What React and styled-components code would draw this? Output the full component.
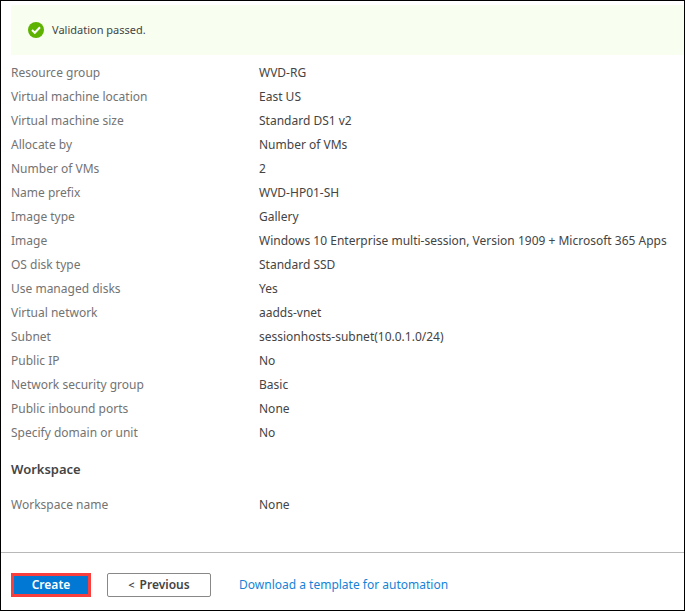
import React from "react";
import styled, { createGlobalStyle, css } from "styled-components";

const GlobalStyle = createGlobalStyle`
  *, *::before, *::after { box-sizing: border-box; }
  body {
    margin: 0;
    background: #fff;
    color: #444;
    font-family: "Noto Sans", "Open Sans", sans-serif;
    font-size: 12px;
    line-height: 24px;
  }
`;

const Page = styled.div`
  display: flex;
  flex-direction: column;
  min-height: 100vh;
  border: 1px solid #000;
`;

const Content = styled.main`
  flex: 1;
  padding: 4px 0 0 10px;
`;

const Banner = styled.div`
  display: flex;
  align-items: center;
  gap: 8px;
  height: 50px;
  margin-bottom: 6px;
  padding: 0 17px;
  background: #f8fff0;
  font-size: 11px;
`;

const StatusIcon = styled.svg`
  flex: none;
  width: 16px;
  height: 16px;
`;

const Details = styled.dl`
  display: grid;
  grid-template-columns: 248px 1fr;
  margin: 0;
`;

const Term = styled.dt`
  color: #737373;
`;

const Value = styled.dd`
  margin: 0;
  white-space: nowrap;
`;

const SectionTitle = styled.h2`
  margin: 12px 0;
  font-size: 13px;
  font-weight: 600;
`;

const Footer = styled.footer`
  display: flex;
  align-items: center;
  padding: 20px 10px 13px;
  border-top: 1px solid #b8b8b8;
`;

const Button = styled.button`
  display: flex;
  align-items: center;
  justify-content: center;
  height: 24px;
  margin-right: 16px;
  padding: 0;
  font: inherit;
  font-weight: 600;
  line-height: 16px;
  cursor: pointer;
  ${({ $primary }) =>
    $primary
      ? css`
          width: 80px;
          border: 3px solid #f93e3e;
          background: #0078d4;
          color: #fff;
        `
      : css`
          width: 104px;
          margin-right: 28px;
          border: 1px solid #8a8886;
          border-radius: 2px;
          background: #fff;
          color: #444;
        `}
`;

const Chevron = styled.span`
  margin-right: 5px;
  font-size: 11px;
`;

const TemplateLink = styled.a`
  color: #1583d8;
  text-decoration: none;
`;

const vmDetails = [
  ["Resource group", "WVD-RG"],
  ["Virtual machine location", "East US"],
  ["Virtual machine size", "Standard DS1 v2"],
  ["Allocate by", "Number of VMs"],
  ["Number of VMs", "2"],
  ["Name prefix", "WVD-HP01-SH"],
  ["Image type", "Gallery"],
  ["Image", "Windows 10 Enterprise multi-session, Version 1909 + Microsoft 365 Apps"],
  ["OS disk type", "Standard SSD"],
  ["Use managed disks", "Yes"],
  ["Virtual network", "aadds-vnet"],
  ["Subnet", "sessionhosts-subnet(10.0.1.0/24)"],
  ["Public IP", "No"],
  ["Network security group", "Basic"],
  ["Public inbound ports", "None"],
  ["Specify domain or unit", "No"],
];

const workspaceDetails = [["Workspace name", "None"]];

function DetailList({ items }) {
  return (
    <Details>
      {items.map(([label, value]) => (
        <React.Fragment key={label}>
          <Term>{label}</Term>
          <Value>{value}</Value>
        </React.Fragment>
      ))}
    </Details>
  );
}

export default function App() {
  return (
    <>
      <GlobalStyle />
      <Page>
        <Content>
          <Banner role="status">
            <StatusIcon viewBox="0 0 16 16" aria-hidden="true">
              <circle cx="8" cy="8" r="8" fill="#5db300" />
              <path d="M4 8 6.8 10.8 12 5.2" fill="none" stroke="#fff" strokeWidth="2" />
            </StatusIcon>
            Validation passed.
          </Banner>
          <DetailList items={vmDetails} />
          <SectionTitle>Workspace</SectionTitle>
          <DetailList items={workspaceDetails} />
        </Content>
        <Footer>
          <Button type="button" $primary>Create</Button>
          <Button type="button">
            <Chevron>&lt;</Chevron>
            Previous
          </Button>
          <TemplateLink href="#template">Download a template for automation</TemplateLink>
        </Footer>
      </Page>
    </>
  );
}
